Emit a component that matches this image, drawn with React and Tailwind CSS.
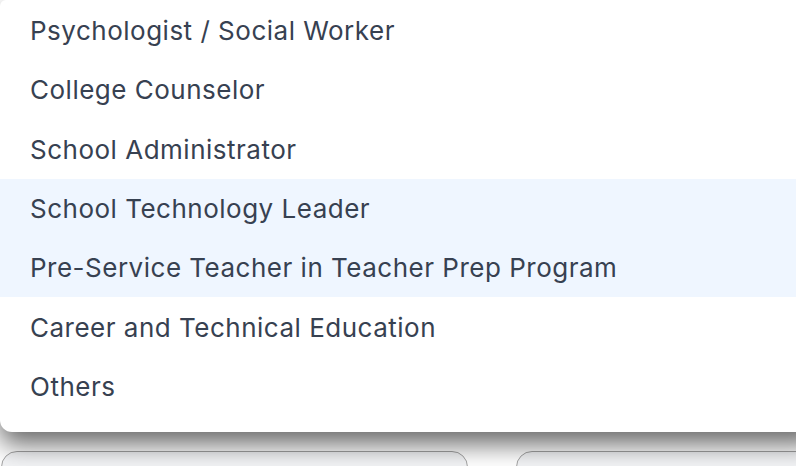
import React from 'react';

const options = [
  'Psychologist / Social Worker',
  'College Counselor',
  'School Administrator',
  'School Technology Leader',
  'Pre-Service Teacher in Teacher Prep Program',
  'Career and Technical Education',
  'Others',
];

const highlighted = ['School Technology Leader', 'Pre-Service Teacher in Teacher Prep Program'];

export default function App() {
  return (
    <div
      className="w-[796px] h-[466px] overflow-hidden bg-white"
      style={{ fontFamily: 'Inter, "Noto Sans", sans-serif' }}
    >
      <div className="relative z-10 w-[820px] rounded-b-xl rounded-t-md bg-white pt-[1px] pb-[16px] shadow-[0_12px_26px_rgba(0,0,0,0.6)]">
        {options.map((opt) => (
          <div
            key={opt}
            className={`h-[59.3px] flex items-center pl-[30px] text-[26px] tracking-[0.5px] text-[#374151] ${
              highlighted.includes(opt) ? 'bg-[#eff6ff]' : ''
            }`}
          >
            {opt}
          </div>
        ))}
      </div>
      <div className="flex gap-[48px] mt-[19px] pl-[1px]">
        <div className="w-[467px] h-[60px] rounded-2xl border border-[#a3a3a3] bg-[#f3f4f6]" />
        <div className="flex-1 h-[60px] rounded-2xl border border-[#a3a3a3] bg-[#f3f4f6] -mr-[40px]" />
      </div>
    </div>
  );
}
